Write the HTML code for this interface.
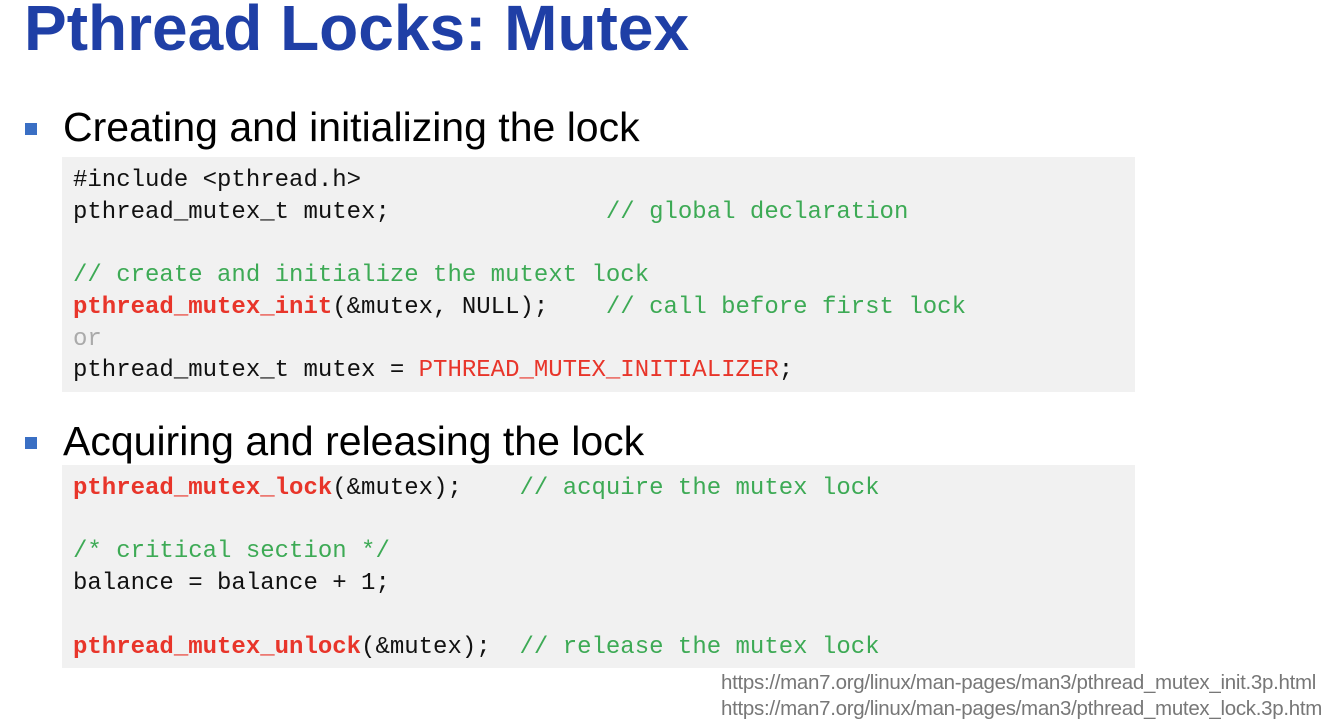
<!DOCTYPE html>
<html><head><style>
body{margin:0;width:1323px;height:703px;overflow:hidden;background:#fff;position:relative;font-family:"Liberation Sans",sans-serif}
.t{position:absolute;left:24px;top:-9px;font-size:64px;font-weight:bold;color:#1f3fa6;white-space:nowrap}
.b{position:absolute;left:63px;font-size:41px;color:#000;white-space:nowrap}
.sq{position:absolute;left:25px;width:12px;height:12px;background:#3a6fc4}
.code{position:absolute;left:62px;width:1073px;background:#f1f1f1}
.l{position:absolute;left:11px;font-family:"Liberation Mono",monospace;font-size:24px;line-height:31.7px;white-space:pre;color:#111}
.r{color:#e8352a;font-weight:bold}
.rr{color:#e8352a}
.g{color:#3daa55}
.o{color:#aaa}
.u{position:absolute;left:721px;font-size:20.5px;color:#777;white-space:nowrap;letter-spacing:-0.3px}
</style></head><body>
<div class="t">Pthread Locks: Mutex</div>
<div class="sq" style="top:123px"></div>
<div class="b" style="top:104px">Creating and initializing the lock</div>
<div class="code" style="top:157px;height:235px">
<div class="l" style="top:8px">#include &lt;pthread.h&gt;
pthread_mutex_t mutex;               <span class="g">// global declaration</span>

<span class="g">// create and initialize the mutext lock</span>
<span class="r">pthread_mutex_init</span>(&amp;mutex, NULL);    <span class="g">// call before first lock</span>
<span class="o">or</span>
pthread_mutex_t mutex = <span class="rr">PTHREAD_MUTEX_INITIALIZER</span>;</div>
</div>
<div class="sq" style="top:437px"></div>
<div class="b" style="top:418px">Acquiring and releasing the lock</div>
<div class="code" style="top:465px;height:203px">
<div class="l" style="top:8px"><span class="r">pthread_mutex_lock</span>(&amp;mutex);    <span class="g">// acquire the mutex lock</span>

<span class="g">/* critical section */</span>
balance = balance + 1;

<span class="r">pthread_mutex_unlock</span>(&amp;mutex);  <span class="g">// release the mutex lock</span></div>
</div>
<div class="u" style="top:671px">https://man7.org/linux/man-pages/man3/pthread_mutex_init.3p.html</div>
<div class="u" style="top:697px">https://man7.org/linux/man-pages/man3/pthread_mutex_lock.3p.html</div>
</body></html>
